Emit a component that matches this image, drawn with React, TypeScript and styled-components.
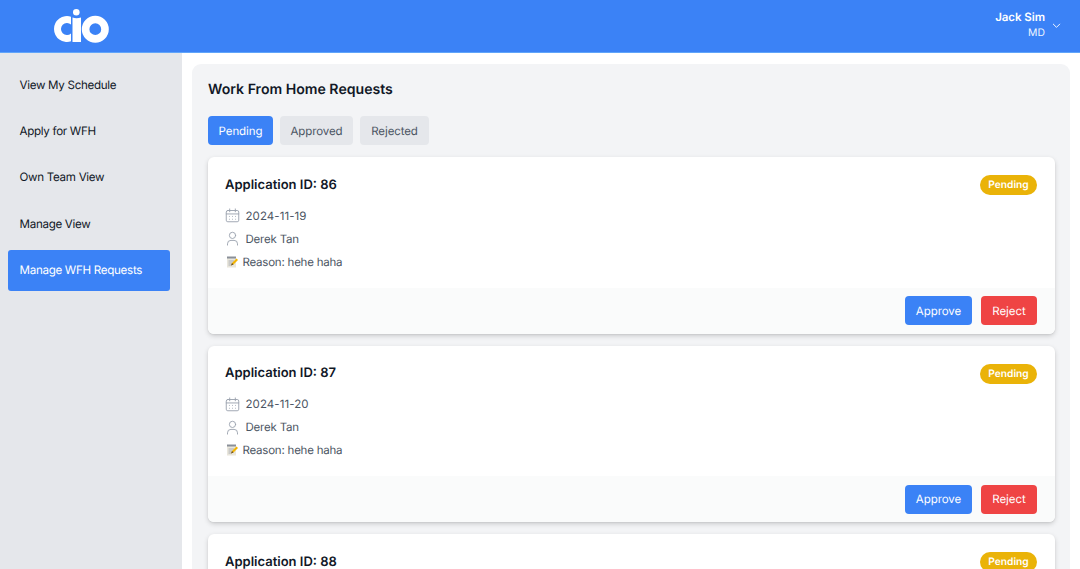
import React from "react";
import styled, { createGlobalStyle } from "styled-components";

const Global = createGlobalStyle`
  html, body { margin: 0; padding: 0; height: 100%; overflow: hidden; background: #fff; }
  body { font-family: Inter, "Liberation Sans", sans-serif; color: #111827; text-rendering: geometricPrecision; }
  * { box-sizing: border-box; }
`;

const Page = styled.div`
  width: 1080px;
  height: 569px;
  display: flex;
  flex-direction: column;
  overflow: hidden;
`;
const Header = styled.header`
  height: 53px;
  flex: none;
  background: #3b82f6;
  border-bottom: 1px solid #60a5fa;
  display: flex;
  align-items: center;
  justify-content: space-between;
  padding: 0 18px 2px 54px;
`;
const LogoMark = styled.svg`
  width: 56px;
  height: 36px;
  display: block;
  margin-top: 2px;
`;
const User = styled.div`
  display: flex;
  align-items: center;
  gap: 3px;
  color: #fff;
`;
const UserText = styled.div`
  text-align: right;
`;
const UserName = styled.div`
  font-size: 11.5px;
  font-weight: 600;
  line-height: 15px;
  letter-spacing: -0.05px;
`;
const UserRole = styled.div`
  font-size: 10.4px;
  line-height: 15px;
  color: #eff6ff;
`;
const Chevron = styled.svg`
  width: 11px;
  height: 11px;
  margin-left: 3px;
  margin-top: 1px;
  fill: none;
  stroke: #fff;
  stroke-width: 2;
  stroke-linecap: round;
  stroke-linejoin: round;
`;
const Body = styled.div`
  flex: 1;
  display: flex;
  min-height: 0;
`;
const Sidebar = styled.nav`
  width: 182px;
  flex: none;
  background: #e5e7eb;
  padding: 12px 12px 0 8px;
  display: flex;
  flex-direction: column;
  gap: 5.7px;
`;
const NavItem = styled.div<{ $active?: boolean }>`
  height: 40.6px;
  display: flex;
  align-items: center;
  padding: 0 11.5px 1px;
  border-radius: 3px;
  font-size: 11.6px;
  letter-spacing: -0.3px;
  color: ${(p) => (p.$active ? "#fff" : "#111827")};
  background: ${(p) => (p.$active ? "#3b82f6" : "transparent")};
`;
const Main = styled.main`
  flex: 1;
  min-width: 0;
  padding: 11px 10px 0;
`;
const Panel = styled.section`
  background: #f3f4f6;
  border-radius: 9px 9px 0 0;
  padding: 17px 15px 0 16px;
  height: 520px;
  overflow: hidden;
`;
const Title = styled.h1`
  margin: 0 0 17px;
  font-size: 14.1px;
  font-weight: 600;
  line-height: 18px;
  color: #111827;
`;
const Tabs = styled.div`
  display: flex;
  gap: 7px;
  margin-bottom: 12px;
`;
const Tab = styled.div<{ $active?: boolean; $w: number }>`
  height: 29px;
  width: ${(p) => p.$w}px;
  display: flex;
  align-items: center;
  justify-content: center;
  border-radius: 4px;
  font-size: 11.5px;
  letter-spacing: -0.1px;
  background: ${(p) => (p.$active ? "#3b82f6" : "#e5e7eb")};
  color: ${(p) => (p.$active ? "#fff" : "#4b5563")};
`;
const Cards = styled.div`
  display: flex;
  flex-direction: column;
  gap: 12px;
`;
const Card = styled.article`
  flex: none;
  height: 176.5px;
  background: #fff;
  border-radius: 6px;
  box-shadow: 0 2px 5px rgba(0, 0, 0, 0.16), 0 1px 2px rgba(0, 0, 0, 0.06);
  display: flex;
  flex-direction: column;
  overflow: hidden;
`;
const CardTop = styled.div`
  flex: 1;
  padding: 17.5px 18px 0 17px;
`;
const CardHead = styled.div`
  display: flex;
  align-items: center;
  justify-content: space-between;
  margin-bottom: 8.5px;
`;
const AppId = styled.h2`
  margin: 0;
  font-size: 13px;
  font-weight: 600;
  line-height: 21px;
  color: #111827;
`;
const Badge = styled.span`
  height: 20px;
  width: 57px;
  display: inline-flex;
  align-items: center;
  justify-content: center;
  border-radius: 10px;
  background: #eab308;
  color: #fff;
  font-size: 10.2px;
  font-weight: 600;
`;
const Meta = styled.div<{ $spacing: number }>`
  display: flex;
  align-items: center;
  height: 23px;
  font-size: 11.5px;
  letter-spacing: ${(p) => p.$spacing}px;
  color: #4b5563;
`;
const MetaIcon = styled.svg`
  width: 15px;
  height: 15px;
  margin-left: -0.5px;
  margin-right: 6px;
  flex: none;
  color: #9ca3af;
  fill: none;
  stroke: currentColor;
  stroke-width: 1.5;
  stroke-linecap: round;
  stroke-linejoin: round;
`;
const Memo = styled.svg`
  width: 12px;
  height: 12px;
  margin-left: 0.5px;
  margin-right: 5px;
  flex: none;
`;
const CardFoot = styled.div`
  height: 46px;
  flex: none;
  background: #fafbfb;
  display: flex;
  justify-content: flex-end;
  align-items: flex-start;
  gap: 9px;
  padding: 8.5px 18px 0 0;
`;
const ActionButton = styled.div<{ $tone: string; $w: number }>`
  height: 29px;
  width: ${(p) => p.$w}px;
  display: flex;
  align-items: center;
  justify-content: center;
  border-radius: 4px;
  background: ${(p) => p.$tone};
  color: #fff;
  font-size: 11.5px;
  letter-spacing: -0.05px;
`;

const Logo = () => (
  <LogoMark viewBox="0 0 56 36" aria-label="cio">
    <path d="M17 8.63A13 13 0 1 0 17 33.37V25.47A6 6 0 1 1 17 16.53Z" fill="#fff" />
    <circle cx="22.3" cy="4.2" r="3.3" fill="#fff" />
    <path d="M18.5 9.6Q22.5 11 27 9.6V34H18.5Z" fill="#fff" />
    <path
      fillRule="evenodd"
      d="M41.3 7.7a13.5 13.5 0 1 0 0 27a13.5 13.5 0 0 0 0-27zm0 7.6a5.9 5.9 0 1 1 0 11.8a5.9 5.9 0 0 1 0-11.8z"
      fill="#fff"
    />
  </LogoMark>
);

const requests = [
  { id: 86, date: "2024-11-19" },
  { id: 87, date: "2024-11-20" },
  { id: 88, date: "2024-11-21" },
];

const nav = ["View My Schedule", "Apply for WFH", "Own Team View", "Manage View", "Manage WFH Requests"];

export default function App() {
  return (
    <Page>
      <Global />
      <Header>
        <Logo />
        <User>
          <UserText>
            <UserName>Jack Sim</UserName>
            <UserRole>MD</UserRole>
          </UserText>
          <Chevron viewBox="0 0 24 24">
            <path d="m5 9 7 7 7-7" />
          </Chevron>
        </User>
      </Header>
      <Body>
        <Sidebar>
          {nav.map((n) => (
            <NavItem key={n} $active={n === "Manage WFH Requests"}>{n}</NavItem>
          ))}
        </Sidebar>
        <Main>
          <Panel>
            <Title>Work From Home Requests</Title>
            <Tabs>
              <Tab $active $w={65}>Pending</Tab>
              <Tab $w={73}>Approved</Tab>
              <Tab $w={69}>Rejected</Tab>
            </Tabs>
            <Cards>
              {requests.map((r) => (
                <Card key={r.id}>
                  <CardTop>
                    <CardHead>
                      <AppId>Application ID: {r.id}</AppId>
                      <Badge>Pending</Badge>
                    </CardHead>
                    <Meta $spacing={0.08}>
                      <MetaIcon viewBox="0 0 24 24">
                        <rect x="2" y="4" width="20" height="18" rx="2.5" />
                        <path d="M2 9.5h20M7.5 1.5V6M16.5 1.5V6" />
                        <path d="M7 13.5h.01M12 13.5h.01M17 13.5h.01M7 18h.01M12 18h.01M17 18h.01" />
                      </MetaIcon>
                      {r.date}
                    </Meta>
                    <Meta $spacing={-0.2}>
                      <MetaIcon viewBox="0 0 24 24">
                        <circle cx="12" cy="7" r="5" />
                        <path d="M4 22.5v-2a5.5 5.5 0 0 1 5.5-5.5h5a5.5 5.5 0 0 1 5.5 5.5v2" />
                      </MetaIcon>
                      Derek Tan
                    </Meta>
                    <Meta $spacing={-0.22}>
                      <Memo viewBox="0 0 24 24">
                        <rect x="2" y="3" width="18" height="20" fill="#e9e6dc" />
                        <rect x="2" y="1" width="18" height="4" fill="#8a8f98" />
                        <path d="M5 10h11M5 14h8M5 18h5" stroke="#9aa0a8" strokeWidth="1.6" />
                        <path d="M10 19l2-5L21 5l3 3-9 9z" fill="#f4b400" />
                        <path d="M10 19l2-5 3 3z" fill="#5d4a32" />
                      </Memo>
                      Reason: hehe haha
                    </Meta>
                  </CardTop>
                  <CardFoot>
                    <ActionButton $tone="#3b82f6" $w={67}>Approve</ActionButton>
                    <ActionButton $tone="#ef4444" $w={56}>Reject</ActionButton>
                  </CardFoot>
                </Card>
              ))}
            </Cards>
          </Panel>
        </Main>
      </Body>
    </Page>
  );
}
